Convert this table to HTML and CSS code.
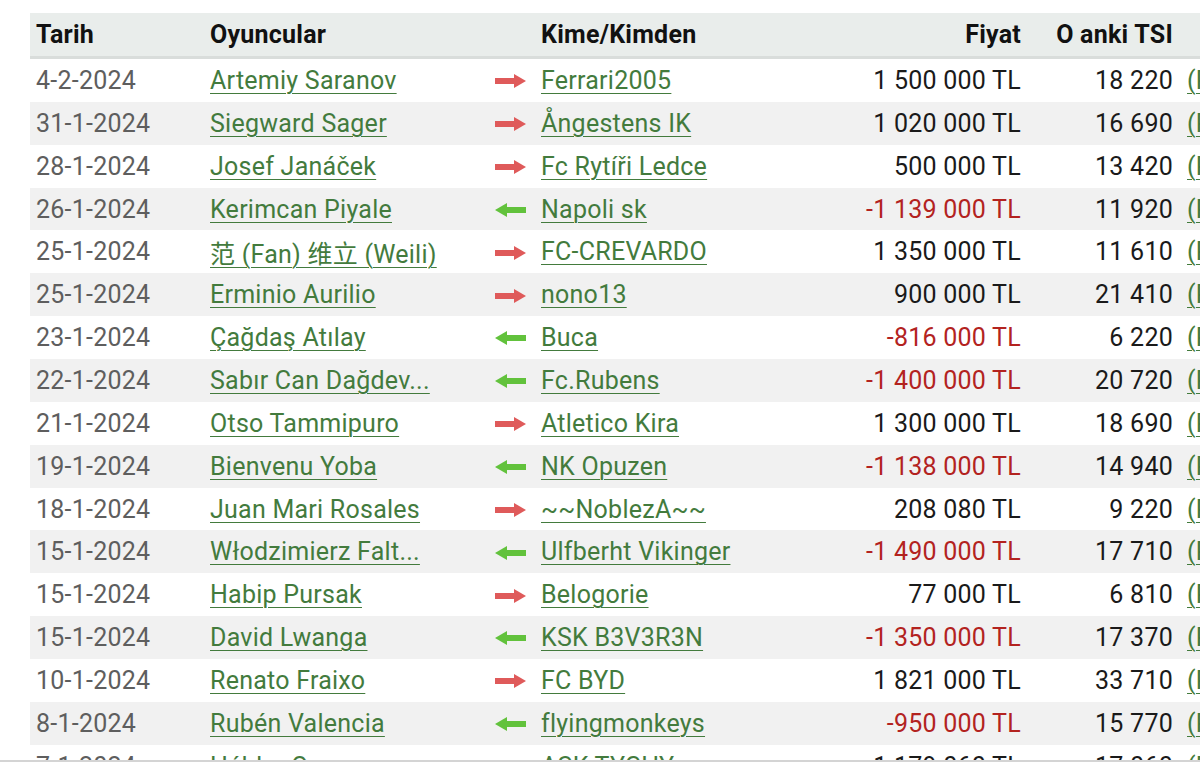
FILE: index.html
```html
<!DOCTYPE html>
<html lang="tr">
<head>
<meta charset="utf-8">
<title>Transferler</title>
<link rel="stylesheet" href="styles.css">
</head>
<body>
<div class="wrap">
<table class="transfers">
  <colgroup>
    <col class="c-date"><col class="c-player"><col class="c-dir"><col class="c-team"><col class="c-price"><col class="c-tsi"><col class="c-more">
  </colgroup>
  <thead>
    <tr><th>Tarih</th><th>Oyuncular</th><th></th><th>Kime/Kimden</th><th class="num">Fiyat</th><th class="num">O anki TSI</th><th></th></tr>
  </thead>
  <tbody>
    <tr><td class="date">4-2-2024</td><td><a href="#">Artemiy Saranov</a></td><td class="dir"><span class="arr out"></span></td><td><a href="#">Ferrari2005</a></td><td class="num">1 500 000 TL</td><td class="num">18 220</td><td class="more"><a href="#">(R)</a></td></tr>
    <tr><td class="date">31-1-2024</td><td><a href="#">Siegward Sager</a></td><td class="dir"><span class="arr out"></span></td><td><a href="#">Ångestens IK</a></td><td class="num">1 020 000 TL</td><td class="num">16 690</td><td class="more"><a href="#">(R)</a></td></tr>
    <tr><td class="date">28-1-2024</td><td><a href="#">Josef Janáček</a></td><td class="dir"><span class="arr out"></span></td><td><a href="#">Fc Rytíři Ledce</a></td><td class="num">500 000 TL</td><td class="num">13 420</td><td class="more"><a href="#">(R)</a></td></tr>
    <tr><td class="date">26-1-2024</td><td><a href="#">Kerimcan Piyale</a></td><td class="dir"><span class="arr in"></span></td><td><a href="#">Napoli sk</a></td><td class="num neg">-1 139 000 TL</td><td class="num">11 920</td><td class="more"><a href="#">(R)</a></td></tr>
    <tr><td class="date">25-1-2024</td><td><a href="#">范 (Fan) 维立 (Weili)</a></td><td class="dir"><span class="arr out"></span></td><td><a href="#">FC-CREVARDO</a></td><td class="num">1 350 000 TL</td><td class="num">11 610</td><td class="more"><a href="#">(R)</a></td></tr>
    <tr><td class="date">25-1-2024</td><td><a href="#">Erminio Aurilio</a></td><td class="dir"><span class="arr out"></span></td><td><a href="#">nono13</a></td><td class="num">900 000 TL</td><td class="num">21 410</td><td class="more"><a href="#">(R)</a></td></tr>
    <tr><td class="date">23-1-2024</td><td><a href="#">Çağdaş Atılay</a></td><td class="dir"><span class="arr in"></span></td><td><a href="#">Buca</a></td><td class="num neg">-816 000 TL</td><td class="num">6 220</td><td class="more"><a href="#">(R)</a></td></tr>
    <tr><td class="date">22-1-2024</td><td><a href="#">Sabır Can Dağdev...</a></td><td class="dir"><span class="arr in"></span></td><td><a href="#">Fc.Rubens</a></td><td class="num neg">-1 400 000 TL</td><td class="num">20 720</td><td class="more"><a href="#">(R)</a></td></tr>
    <tr><td class="date">21-1-2024</td><td><a href="#">Otso Tammipuro</a></td><td class="dir"><span class="arr out"></span></td><td><a href="#">Atletico Kira</a></td><td class="num">1 300 000 TL</td><td class="num">18 690</td><td class="more"><a href="#">(R)</a></td></tr>
    <tr><td class="date">19-1-2024</td><td><a href="#">Bienvenu Yoba</a></td><td class="dir"><span class="arr in"></span></td><td><a href="#">NK Opuzen</a></td><td class="num neg">-1 138 000 TL</td><td class="num">14 940</td><td class="more"><a href="#">(R)</a></td></tr>
    <tr><td class="date">18-1-2024</td><td><a href="#">Juan Mari Rosales</a></td><td class="dir"><span class="arr out"></span></td><td><a href="#">~~NoblezA~~</a></td><td class="num">208 080 TL</td><td class="num">9 220</td><td class="more"><a href="#">(R)</a></td></tr>
    <tr><td class="date">15-1-2024</td><td><a href="#">Włodzimierz Falt...</a></td><td class="dir"><span class="arr in"></span></td><td><a href="#">Ulfberht Vikinger</a></td><td class="num neg">-1 490 000 TL</td><td class="num">17 710</td><td class="more"><a href="#">(R)</a></td></tr>
    <tr><td class="date">15-1-2024</td><td><a href="#">Habip Pursak</a></td><td class="dir"><span class="arr out"></span></td><td><a href="#">Belogorie</a></td><td class="num">77 000 TL</td><td class="num">6 810</td><td class="more"><a href="#">(R)</a></td></tr>
    <tr><td class="date">15-1-2024</td><td><a href="#">David Lwanga</a></td><td class="dir"><span class="arr in"></span></td><td><a href="#">KSK B3V3R3N</a></td><td class="num neg">-1 350 000 TL</td><td class="num">17 370</td><td class="more"><a href="#">(R)</a></td></tr>
    <tr><td class="date">10-1-2024</td><td><a href="#">Renato Fraixo</a></td><td class="dir"><span class="arr out"></span></td><td><a href="#">FC BYD</a></td><td class="num">1 821 000 TL</td><td class="num">33 710</td><td class="more"><a href="#">(R)</a></td></tr>
    <tr><td class="date">8-1-2024</td><td><a href="#">Rubén Valencia</a></td><td class="dir"><span class="arr in"></span></td><td><a href="#">flyingmonkeys</a></td><td class="num neg">-950 000 TL</td><td class="num">15 770</td><td class="more"><a href="#">(R)</a></td></tr>
    <tr><td class="date">7-1-2024</td><td><a href="#">Hélder Orosz</a></td><td class="dir"><span class="arr out"></span></td><td><a href="#">ASK TYCHY</a></td><td class="num">1 179 060 TL</td><td class="num">17 060</td><td class="more"><a href="#">(R)</a></td></tr>
  </tbody>
</table>
</div>
<div class="navbar"></div>
</body>
</html>
```
FILE: styles.css
```css
html, body {
  margin: 0;
  padding: 0;
  background: #ffffff;
  overflow: hidden;
}
body {
  font-family: Roboto, "Noto Sans CJK SC", sans-serif;
  font-size: 25px;
  letter-spacing: 0.25px;
  color: #1a1a1a;
  height: 762px;
}
.wrap {
  padding: 13px 0 0 30px;
  overflow: hidden;
  height: 749px;
}
.transfers {
  border-collapse: collapse;
  table-layout: fixed;
  width: 1220px;
}
.c-date { width: 174px; }
.c-player { width: 281px; }
.c-dir { width: 50px; }
.c-team { width: 292px; }
.c-price { width: 200px; }
.c-tsi { width: 152px; }
.c-more { width: 71px; }

.transfers th {
  background: #e9edeb;
  font-weight: 700;
  text-align: left;
  padding: 0 6px;
  height: 43px;
  border-bottom: 3px solid #d9dddb;
  color: #111;
  white-space: nowrap;
}
.transfers td {
  padding: 0 6px;
  height: 42.87px;
  white-space: nowrap;
  overflow: hidden;
}
.transfers tbody tr:nth-child(even) td {
  background: #f1f1f1;
}
.transfers .num {
  text-align: right;
}
.transfers .date {
  color: #5e5e5e;
}
.transfers .neg {
  color: #b3231f;
}
.transfers a {
  color: #437b3d;
  text-decoration: underline;
  text-underline-offset: 4px;
  text-decoration-thickness: 1px;
}
.transfers td.dir {
  text-align: center;
  padding: 0;
}
.transfers td.more {
  padding-left: 8px;
}
.arr {
  display: inline-block;
  width: 31px;
  height: 14px;
  vertical-align: middle;
  position: relative;
  top: -1px;
}
.arr::before {
  content: "";
  position: absolute;
  top: 4px;
  height: 6px;
  width: 20px;
}
.arr::after {
  content: "";
  position: absolute;
  top: 0;
  width: 0;
  height: 0;
  border-top: 7px solid transparent;
  border-bottom: 7px solid transparent;
}
.arr.out::before { left: 0; background: #df5a5a; }
.arr.out::after { right: 0; border-left: 12px solid #df5a5a; }
.arr.in::before { right: 0; background: #62c23c; }
.arr.in::after { left: 0; border-right: 12px solid #62c23c; }

.navbar {
  position: fixed;
  left: 0;
  right: 0;
  bottom: 0;
  height: 2px;
  background: #d4d4d4;
}
```
